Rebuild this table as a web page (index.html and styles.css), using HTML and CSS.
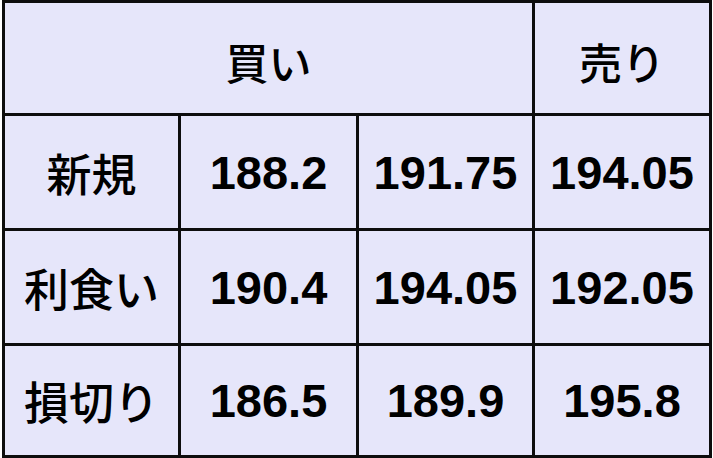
FILE: index.html
```html
<!DOCTYPE html>
<html lang="ja">
<head>
<meta charset="utf-8">
<link rel="stylesheet" href="styles.css">
</head>
<body>
<div class="table">
  <div class="cell head buy">買い</div>
  <div class="cell head">売り</div>

  <div class="cell label">新規</div>
  <div class="cell num">188.2</div>
  <div class="cell num">191.75</div>
  <div class="cell num">194.05</div>

  <div class="cell label">利食い</div>
  <div class="cell num">190.4</div>
  <div class="cell num">194.05</div>
  <div class="cell num">192.05</div>

  <div class="cell label">損切り</div>
  <div class="cell num">186.5</div>
  <div class="cell num">189.9</div>
  <div class="cell num">195.8</div>
</div>
</body>
</html>
```

FILE: styles.css
```css
html, body {
  margin: 0;
  padding: 0;
  background: #ffffff;
}

.table {
  margin-left: 2px;
  width: 710px;
  height: 458px;
  box-sizing: border-box;
  display: grid;
  grid-template-columns: 173px 175px 173px 174px;
  grid-template-rows: 110px 112px 112px 109px;
  gap: 3px;
  padding: 3px;
  background: #0d0d0d;
}

.cell {
  background: #e6e6fa;
  display: flex;
  align-items: center;
  justify-content: center;
  color: #000;
  white-space: nowrap;
}

.head {
  font-family: "Noto Sans CJK JP", sans-serif;
  font-size: 43px;
  font-weight: 500;
  padding-top: 6px;
  box-sizing: border-box;
}

.buy {
  grid-column: 1 / 4;
}

.label {
  font-family: "Noto Sans CJK JP", sans-serif;
  font-size: 45px;
  font-weight: 500;
}

.num {
  font-family: "Liberation Sans", Arial, sans-serif;
  font-size: 47px;
  font-weight: 700;
}
```
